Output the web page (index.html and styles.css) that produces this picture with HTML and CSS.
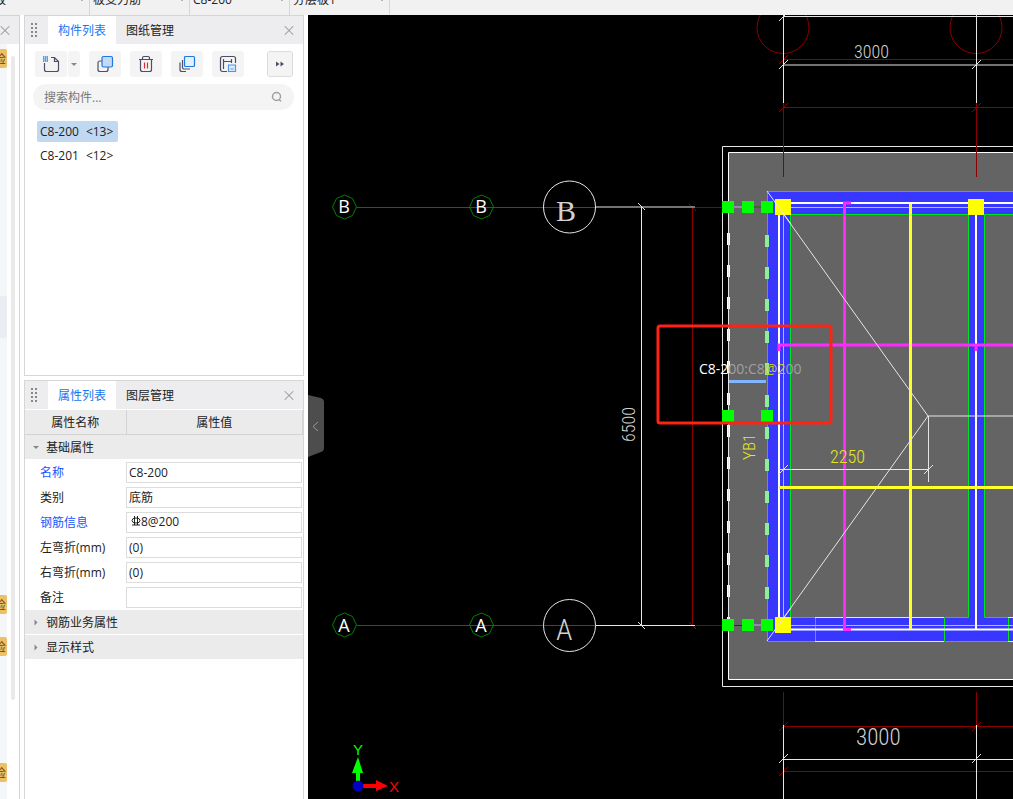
FILE: index.html
```html
<!DOCTYPE html>
<html lang="zh-CN">
<head>
    <meta charset="UTF-8">
    <meta name="viewport" content="width=device-width, initial-scale=1.0">
    <title>构件列表</title>
    <link rel="stylesheet" href="styles.css">
</head>
<body>
    <header class="topbar">
        <button class="combo combo-first">板<i></i></button>
        <button class="combo">板受力筋<i></i></button>
        <button class="combo">C8-200<i></i></button>
        <button class="combo">分层板1<i></i></button>
    </header>

    <main class="workspace">
        <aside class="strip">
            <div class="strip-head"><button class="close" aria-label="关闭"></button></div>
            <div class="strip-body">
                <div class="strip-list">
                    <span class="tag tag-1">检</span>
                    <span class="strip-active"></span>
                    <span class="tag tag-2">检</span>
                    <span class="tag tag-3">检</span>
                    <span class="tag tag-4">检</span>
                </div>
                <div class="strip-scroll"></div>
            </div>
        </aside>

        <div class="dock">
            <section class="panel panel-list">
                <div class="tabs">
                    <span class="grip"></span>
                    <button class="tab active">构件列表</button>
                    <button class="tab">图纸管理</button>
                    <button class="close" aria-label="关闭"></button>
                </div>
                <div class="toolbar">
                    <div class="split">
                        <button class="tool" aria-label="新建">
                            <svg width="18" height="18" viewBox="0 0 18 18" fill="none" stroke="#4b4f63" stroke-width="1.2">
                                <path d="M2.500 8v6.500a2 2 0 0 0 2 2h10a2 2 0 0 0 2-2V6.500l-4-4H9M12.500 2.500v4h4"/>
                                <path d="M1 2h5M1 4h5M1 6h5" stroke="#2f7fe6" stroke-width="1.500" stroke-dasharray="1.500 .5"/>
                            </svg>
                        </button>
                        <button class="tool drop" aria-label="新建菜单"><i></i></button>
                    </div>
                    <button class="tool" aria-label="复制">
                        <svg width="18" height="18" viewBox="0 0 18 18" fill="none" stroke-width="1.2">
                            <path d="M6 6H4a2 2 0 0 0-2 2v6.500a2 2 0 0 0 2 2h6a2 2 0 0 0 2-2V12" stroke="#4b4f63"/>
                            <rect x="6" y="1.500" width="10.500" height="10.500" rx="1.500" fill="#c3d9f6" stroke="#1f78e0"/>
                        </svg>
                    </button>
                    <button class="tool" aria-label="删除">
                        <svg width="18" height="18" viewBox="0 0 18 18" fill="none" stroke="#4b4f63" stroke-width="1.2">
                            <path d="M2 4.500h14M5.500 4.500V3a1.500 1.500 0 0 1 1.500-1.500h4A1.500 1.500 0 0 1 12.500 3v1.500M3.500 4.500v10a2 2 0 0 0 2 2h7a2 2 0 0 0 2-2v-10"/>
                            <path d="M7.500 7.500v6M10.500 7.500v6" stroke="#e02a32"/>
                        </svg>
                    </button>
                    <button class="tool" aria-label="层间复制">
                        <svg width="18" height="18" viewBox="0 0 18 18" fill="none" stroke-width="1.2">
                            <path d="M4.500 5v7.500a1.500 1.500 0 0 0 1.500 1.500h6M2 7.500v7a2 2 0 0 0 2 2h4" stroke="#4b4f63"/>
                            <rect x="6.500" y="1.500" width="10" height="10" rx="1" fill="#e3effd" stroke="#1f78e0"/>
                        </svg>
                    </button>
                    <button class="tool" aria-label="存档">
                        <svg width="18" height="18" viewBox="0 0 18 18" fill="none" stroke="#4b4f63" stroke-width="1.2">
                            <path d="M8 16.500H3.500a2 2 0 0 1-2-2v-11a2 2 0 0 1 2-2h11a2 2 0 0 1 2 2V8M4.500 4v10M4.500 6.500h8M12.500 4v4"/>
                            <path d="M9.500 10h7v6.500h-7zM11.500 14h3" stroke="#4c95ee" fill="#dcebfc"/>
                        </svg>
                    </button>
                    <button class="tool more" aria-label="更多">
                        <svg width="10" height="8" viewBox="0 0 10 8" fill="#4b4f63"><path d="M1 1.500l3.500 2.500L1 6.500zM5.500 1.500L9 4 5.500 6.500z"/></svg>
                    </button>
                </div>
                <label class="search">
                    <input type="text" placeholder="搜索构件..." aria-label="搜索构件">
                    <svg width="12" height="12" viewBox="0 0 12 12" fill="none" stroke="#a0a0a0" stroke-width="1.5"><circle cx="5.500" cy="5.500" r="4"/><path d="M8 8.500l2 2"/></svg>
                </label>
                <ul class="items">
                    <li class="selected"><span>C8-200</span><span>&lt;13&gt;</span></li>
                    <li><span>C8-201</span><span>&lt;12&gt;</span></li>
                </ul>
            </section>

            <section class="panel panel-props">
                <div class="tabs">
                    <span class="grip"></span>
                    <button class="tab active">属性列表</button>
                    <button class="tab">图层管理</button>
                    <button class="close" aria-label="关闭"></button>
                </div>
                <table class="props">
                    <thead>
                        <tr><th>属性名称</th><th>属性值</th></tr>
                    </thead>
                    <tbody>
                        <tr class="group open"><td colspan="2"><i></i>基础属性</td></tr>
                        <tr><td><label class="key" for="p1">名称</label></td><td><input id="p1" value="C8-200"></td></tr>
                        <tr><td><label for="p2">类别</label></td><td><input id="p2" value="底筋"></td></tr>
                        <tr>
                            <td><label class="key" for="p3">钢筋信息</label></td>
                            <td>
                                <div class="rebar">
                                    <svg width="10" height="10" viewBox="0 0 10 10" fill="none" stroke="#222"><ellipse cx="5" cy="4.500" rx="4" ry="2.500"/><path d="M3.500 0v9M6.500 0v9M1 9h8"/></svg>
                                    <input id="p3" value="8@200">
                                </div>
                            </td>
                        </tr>
                        <tr><td><label for="p4">左弯折(mm)</label></td><td><input id="p4" value="(0)"></td></tr>
                        <tr><td><label for="p5">右弯折(mm)</label></td><td><input id="p5" value="(0)"></td></tr>
                        <tr><td><label for="p6">备注</label></td><td><input id="p6" value=""></td></tr>
                        <tr class="group"><td colspan="2"><i></i>钢筋业务属性</td></tr>
                        <tr class="group"><td colspan="2"><i></i>显示样式</td></tr>
                    </tbody>
                </table>
            </section>
        </div>

        <div class="canvas">
            <svg class="drawing" viewBox="308 15 705 784" preserveAspectRatio="xMinYMin slice">
                <!-- slab -->
                <path class="white" d="M1100 146.500H722.500V686.500H1100"/>
                <path class="slab" d="M1100 152.500H728.500V679.500H1100"/>

                <!-- beams -->
                <path class="beam" d="M767 191h340v24H767zM767 617h340v25H767zM767 191h24v451h-24zM968 191h16v440h-16z"/>
                <path class="green" d="M1100 191.500H767.500V641.500H815.500V617.500H790.500V214.500H968.500V617.500H944.500V641.500H1008.500V617.500H984.500V214.500H1100"/>
                <path class="white" d="M815 617.500H944M815 641.500H944M1008 617.500h90M1008 641.500h90"/>
                <path class="pale" d="M783 207.500h317M783 625.500h317M783.500 207V625M976.500 207V629"/>
                <path class="white bold" d="M783 203h317M783 629.500h317M779 203V629M976 203V629"/>

                <!-- axis lines -->
                <path class="red" d="M692.500 207V625M695 207.500h30M695 625.500h50M783 59.500h317M783 107.500h317M783.500 103V177M976.500 103V177M783 726.500h317M783 771.500h317M783.500 692V726M976.500 692V726"/>
                <path class="red" d="M689 204l7 7M689 622l7 7M779 64l9-9M779 112l9-9M972 112l9-9M779 731l9-9M972 731l9-9M779 776l9-9"/>
                <circle class="red" cx="783" cy="27.500" r="26"/>
                <circle class="red" cx="976" cy="27.500" r="26"/>
                <path class="green-dark" d="M357 207.500H596M357 625.500H596"/>
                <path class="white" d="M596 207h99M596 625.500h99M641.500 207V625M638 203l7 7M638 622l7 7"/>
                <path class="white" d="M783 16.500h317M783 65h317M783.500 15V103M976.500 15V103M779 21l9-9M779 69l9-9M972 69l9-9"/>
                <path class="white" d="M783 759.500h317M783.500 725v80M976.500 725v80M779 763l9-9M972 763l9-9"/>

                <g class="octagon">
                    <path id="oct" d="M344.500 195l8 3.500 4 8.500-4 8.500-8 3.500-8-3.500-4-8.500 4-8.500z"/>
                    <use href="#oct" x="137"/>
                    <use href="#oct" y="418"/>
                    <use href="#oct" x="137" y="418"/>
                </g>
                <g class="axis-name">
                    <text x="344" y="213">B</text>
                    <text x="481" y="213">B</text>
                    <text x="344" y="632">A</text>
                    <text x="481" y="632">A</text>
                </g>
                <circle class="white" cx="569.500" cy="207" r="26"/>
                <circle class="white" cx="569.500" cy="625.500" r="26"/>
                <text class="cad serif" x="556" y="221">B</text>
                <text class="cad axis" x="556" y="640">A</text>

                <!-- rebar -->
                <path class="magenta" d="M851 203h-6.500V629.500H851M779 351v-6h321M976 351v-6"/>
                <path class="yellow" d="M910.500 204V629M779 487.500h321"/>
                <path class="white" d="M767 191L928 416 767 641M928 416h172M928.500 416v66M779 469.500h150M779 474l9-9M924 474l9-9"/>

                <!-- selected edge -->
                <path class="dash" d="M728.500 233V620"/>
                <path class="white" d="M728.500 207V625"/>
                <path class="dash mint" d="M767 235V620"/>
                <path class="pale" d="M734 207h8M754 625h8"/>
                <path class="green-dark" d="M754 207h8"/>
                <path class="blue" d="M729 381.500h37"/>
                <path class="node" d="M722 201h12v12h-12zM742 201h12v12h-12zM761 201h12v12h-12zM722 410h12v12h-12zM761 410h12v12h-12zM722 619h12v12h-12zM742 619h12v12h-12zM761 619h12v12h-12z"/>
                <path class="column" d="M775 199h16v16h-16zM968 199h16v16h-16zM775 617h16v16h-16z"/>
                <path class="white" d="M775 202l16 22M775 630l16-22"/>

                <text class="cad" x="854" y="58">3000</text>
                <text class="cad tall" x="856" y="745">3000</text>
                <text class="cad lemon" x="830" y="463">2250</text>
                <text class="cad" transform="translate(635 442) rotate(-90)">6500</text>
                <text class="cad lemon small" transform="translate(755 460) rotate(-90)">YB1</text>
                <text class="note" x="699" y="374"><tspan fill="#fff">C8-2</tspan><tspan fill="#a0a0a0">00:C8</tspan><tspan fill="#cccc14">@2</tspan><tspan fill="#a0a0a0">00</tspan></text>
                <rect class="mark" x="658" y="326" width="173" height="97" rx="2"/>

                <!-- ucs -->
                <path d="M356 786V773h-4l6-16 5 16h-3v13z" fill="#0f0"/>
                <path d="M358 784h18v-4l12 6-12 5v-3h-18z" fill="#f00"/>
                <circle cx="358" cy="786" r="5.500" fill="#0000c0"/>
                <text class="ucs" x="353" y="755" fill="#0f0">Y</text>
                <text class="ucs" x="389" y="792" fill="#f00">X</text>
            </svg>
            <button class="collapse" aria-label="收起">
                <svg width="16" height="62" viewBox="0 0 16 62"><path d="M0 0l13 3q3 1 3 4v46q0 3-3 4L0 62z" fill="#4d4d4d"/><path d="M10 27l-5 4.500 5 4.500" fill="none" stroke="#999"/></svg>
            </button>
        </div>
    </main>
</body>
</html>
```
FILE: styles.css
```css
* {
    box-sizing: border-box;
}

body {
    margin: 0;
    height: 100vh;
    display: flex;
    flex-direction: column;
    overflow: hidden;
    background: #fff;
    color: #222;
    font: 12px/16px "Open Sans", "Noto Sans CJK SC", sans-serif;
}

button,
input {
    font: inherit;
    color: inherit;
    border: 0;
    padding: 0;
    margin: 0;
    background: none;
}

/* top bar, scrolled half out of view */
.topbar {
    flex: none;
    height: 15px;
    display: flex;
    align-items: flex-end;
    overflow: hidden;
    background: #f1f1f1;
}

.combo {
    flex: none;
    width: 100px;
    height: 24px;
    padding: 0 4px 7px 3px;
    display: flex;
    align-items: center;
    justify-content: space-between;
    border-right: 1px solid #d6d6d6;
}

.combo-first {
    width: 90px;
    padding-left: 0;
    text-indent: -6px;
}

.combo i {
    border: 3px solid transparent;
    border-top-color: #777;
    border-bottom: 0;
}

.workspace {
    flex: 1;
    min-height: 0;
    display: flex;
}

/* left strip */
.strip {
    flex: none;
    width: 20px;
    display: flex;
    flex-direction: column;
    border-right: 1px solid #d3d3d6;
    border-top: 1px solid #d3d3d6;
}

.strip-head {
    height: 28px;
    display: flex;
    align-items: center;
    background: #ededf0;
}

.strip-body {
    flex: 1;
    display: flex;
    justify-content: space-between;
}

.strip-list {
    width: 7px;
    display: flex;
    flex-direction: column;
    background: #f5f6f8;
}

.strip-active {
    height: 42px;
    margin-top: 228px;
    background: #ebedf2;
}

.tag {
    height: 19px;
    overflow: hidden;
    text-indent: -6px;
    line-height: 21px;
    border-radius: 0 2px 2px 0;
    background: #edc068;
    color: #6b4312;
}

.tag-1 {
    margin-top: 5px;
}

.tag-2 {
    margin-top: 257px;
}

.tag-3 {
    margin-top: 23px;
}

.tag-4 {
    margin-top: 107px;
}

.strip-scroll {
    width: 4px;
    height: 644px;
    margin: 12px 4px 0 0;
    border-radius: 2px;
    background: #e9e9e9;
}

/* dock */
.dock {
    flex: none;
    width: 288px;
    padding: 0 4px;
    display: flex;
    flex-direction: column;
    gap: 4px;
}

.panel {
    border: 1px solid #d6d6d6;
}

.panel-list {
    flex: none;
    height: 361px;
}

.panel-props {
    flex: 1;
    min-height: 0;
    border-bottom: 0;
}

.tabs {
    height: 28px;
    display: flex;
    align-items: center;
    background: #ededf0;
}

.grip {
    width: 6px;
    height: 14px;
    margin: 0 11px 0 6px;
    background: radial-gradient(circle at 1px 1px, #888 1px, transparent 1px) 0 0 / 4px 4px;
}

.tab {
    width: 68px;
    height: 28px;
    padding-top: 2px;
}

.tab.active {
    background: #fff;
    color: #1676f3;
}

.close {
    position: relative;
    width: 10px;
    height: 10px;
}

.tabs .close {
    margin: 0 9px 0 auto;
}

.close::before,
.close::after {
    content: "";
    position: absolute;
    top: 5px;
    left: -1px;
    width: 12px;
    height: 1px;
    background: #999;
    transform: rotate(45deg);
}

.close::after {
    transform: rotate(-45deg);
}

.toolbar {
    display: flex;
    gap: 9px;
    padding: 7px 10px;
}

.split {
    display: flex;
    gap: 1px;
}

.tool {
    width: 32px;
    height: 26px;
    display: flex;
    align-items: center;
    justify-content: center;
    border-radius: 3px;
    background: #f4f4f4;
}

.drop {
    width: 12px;
}

.drop i,
.group i {
    border: 3px solid transparent;
    border-top-color: #888;
    border-bottom: 0;
}

.more {
    width: 26px;
    margin-left: auto;
    border: 1px solid #dcdcdc;
}

.search {
    display: flex;
    align-items: center;
    height: 26px;
    margin: 0 9px 0 8px;
    padding: 0 11px;
    border-radius: 13px;
    background: #f4f4f4;
}

.search input {
    flex: 1;
    min-width: 0;
    padding-top: 2px;
    outline: 0;
}

.search input::placeholder {
    color: #777;
}

.items {
    list-style: none;
    margin: 11px 12px;
    padding: 0;
    display: flex;
    flex-direction: column;
    align-items: flex-start;
    gap: 3px;
}

.items li {
    display: flex;
    gap: 7px;
    height: 21px;
    padding: 0 5px 0 3px;
    line-height: 21px;
    border-radius: 2px;
}

.items .selected {
    background: #c0d8f1;
}

/* property table */
.props {
    width: 100%;
    margin-top: 1px;
    border-collapse: collapse;
    table-layout: fixed;
}

.props th {
    height: 24px;
    padding: 2px 0 0;
    font-weight: normal;
    background: #ebebeb;
    border-right: 1px solid #d3d3d3;
    border-bottom: 1px solid #d3d3d3;
}

.props th:first-child {
    width: 101px;
}

.props td {
    height: 25px;
    padding: 2px 1px 2px 0;
}

.props td:first-child {
    padding: 2px 0 0 15px;
}

.props .key {
    color: #1557ff;
}

.props input {
    display: block;
    width: 100%;
    height: 21px;
    padding: 0 2px;
    border: 1px solid #dcdcdc;
    background: #fff;
}

.rebar {
    height: 21px;
    display: flex;
    align-items: center;
    padding: 0 0 2px 4px;
    border: 1px solid #dcdcdc;
}

.props .rebar input {
    flex: 1;
    height: 17px;
    padding: 0;
    border: 0;
}

.props .group td {
    padding: 2px 0 0 8px;
    background: #ebebeb;
    border-bottom: 1px solid #fff;
}

.group i {
    display: inline-block;
    margin: 0 7px 3px 0;
}

.group:not(.open) i {
    transform: rotate(-90deg);
}

/* drawing area */
.canvas {
    flex: 1;
    min-width: 0;
    position: relative;
    background: #000;
}

.drawing {
    display: block;
    width: 100%;
    height: 100%;
}

.drawing path,
.drawing circle,
.drawing rect {
    stroke-width: 1;
}

.white {
    fill: none;
    stroke: #e6e6e6;
}

.drawing .bold {
    stroke: #fff;
    stroke-width: 2;
}

.pale {
    fill: none;
    stroke: #b4b4ff;
}

.slab {
    fill: #646464;
    stroke: #fff;
}

.beam {
    fill: #3737ff;
}

.green {
    fill: none;
    stroke: #00e61e;
}

.green-dark {
    fill: none;
    stroke: #007300;
}

.red {
    fill: none;
    stroke: #8c0000;
}

.octagon {
    fill: none;
    stroke: #008200;
}

.axis-name {
    font: 18px "Open Sans", sans-serif;
    text-anchor: middle;
    fill: #fff;
}

.cad {
    font: 300 18px "Roboto Condensed", "Open Sans Condensed", Roboto, sans-serif;
    fill: #d2d2d2;
}

.cad.tall {
    font-size: 23px;
}

.cad.axis {
    font-size: 30px;
}

.cad.serif {
    font: 30px "Liberation Serif", serif;
}

.cad.small {
    font-size: 17px;
}

.cad.lemon {
    fill: #e6e61e;
}

.drawing .magenta {
    fill: none;
    stroke: #ff28ff;
    stroke-width: 3;
}

.drawing .yellow {
    stroke: #ffff28;
    stroke-width: 3;
}

.drawing .dash {
    stroke: #fff;
    stroke-width: 3;
    stroke-dasharray: 12 20;
}

.drawing .mint {
    stroke: #8cf09b;
    stroke-width: 4;
}

.drawing .blue {
    stroke: #82b4ff;
    stroke-width: 3;
}

.node {
    fill: #0f0;
}

.column {
    fill: #ff0;
}

.note {
    font: 14px "Open Sans", sans-serif;
}

.drawing .mark {
    fill: none;
    stroke: #ff2314;
    stroke-width: 3;
}

.ucs {
    font: 15px "Liberation Sans", sans-serif;
}

.collapse {
    position: absolute;
    top: 380px;
    left: 0;
    width: 16px;
    height: 62px;
}

.collapse svg {
    display: block;
}
```
